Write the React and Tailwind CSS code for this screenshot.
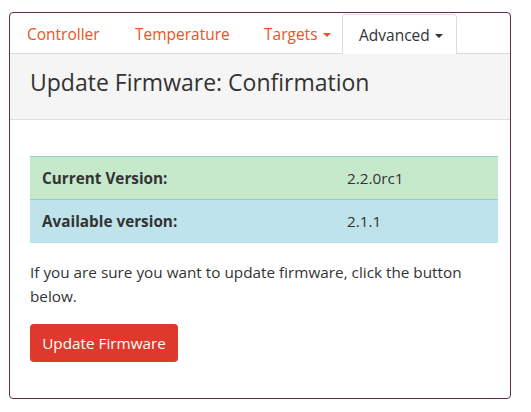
import React from "react";

function Caret({ color }) {
  return (
    <span
      className={`ml-[5px] inline-block w-0 h-0 border-l-[4px] border-r-[4px] border-t-[4px] border-l-transparent border-r-transparent align-middle ${color}`}
    />
  );
}

export default function App() {
  return (
    <div className="w-[531px] h-[412px] bg-white pt-[12px] pl-[9px]" style={{ fontFamily: '"Open Sans", sans-serif' }}>
      <div className="w-[502px] h-[387px] border border-[#5e2c4c] rounded-[4px] overflow-hidden flex flex-col">
        <div className="flex h-[41px] border-b border-[#dddddd] text-[15.5px]">
          <div className="w-[108px] pl-[17px] pt-[3px] flex items-center text-[#e95420]">Controller</div>
          <div className="w-[128px] pl-[17px] pt-[3px] flex items-center text-[#e95420]">Temperature</div>
          <div className="w-[96px] pl-[18px] pt-[3px] flex items-center text-[#e95420]">
            Targets<Caret color="border-t-[#e95420]" />
          </div>
          <div className="mt-[1px] -mb-[1px] w-[115px] bg-white border border-b-0 border-[#dddddd] rounded-t-[4px] flex items-center pl-[16px] pt-[2px] text-[#333333]">
            Advanced<Caret color="border-t-[#333333]" />
          </div>
        </div>
        <div className="h-[66px] bg-[#f5f5f5] border-b border-[#dddddd] pl-[20px] pt-[11px]">
          <h1 className="text-[23px] text-[#333333] leading-[34px]">Update Firmware: Confirmation</h1>
        </div>
        <div className="pl-[20px] pr-[12px] pt-[36px] text-[15.3px] text-[#333333]">
          <div className="border-t border-[#8fd0c6]">
            <div className="flex h-[43px] items-center bg-[#c6e8cb] border-b border-[#8fd0c6]">
              <div className="w-[305px] pl-[12px] font-bold">Current Version:</div>
              <div className="pl-[12px]">2.2.0rc1</div>
            </div>
            <div className="flex h-[43px] items-center bg-[#bfe3ea]">
              <div className="w-[305px] pl-[12px] font-bold">Available version:</div>
              <div className="pl-[12px]">2.1.1</div>
            </div>
          </div>
          <p className="mt-[17px] leading-[24px] pr-[20px]">
            If you are sure you want to update firmware, click the button below.
          </p>
          <button className="mt-[16px] w-[148px] h-[38px] bg-[#df382c] text-white rounded-[4px] text-[15.3px]">
            Update Firmware
          </button>
        </div>
      </div>
    </div>
  );
}
